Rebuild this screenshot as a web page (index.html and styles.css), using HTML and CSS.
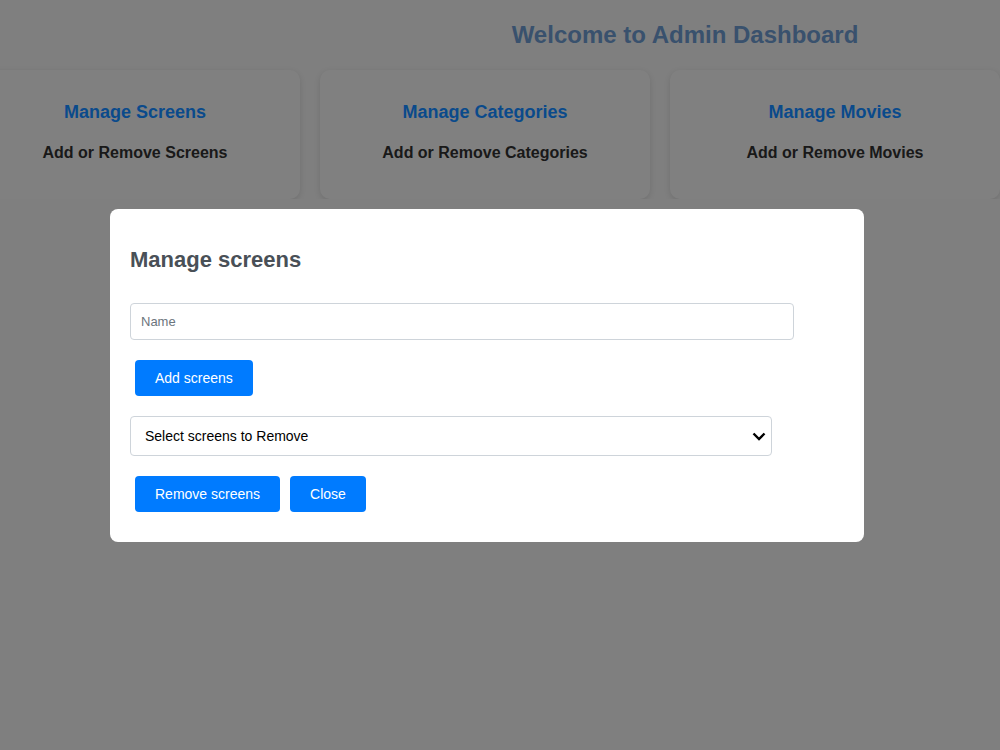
FILE: index.html
```html
<!DOCTYPE html>
<html lang="en">
<head>
  <meta charset="UTF-8">
  <meta name="viewport" content="width=device-width, initial-scale=1.0">
  <title>Admin Dashboard</title>
  <link rel="stylesheet" href="styles.css">
</head>
<body>

<div class="page">
  <h1 class="title">Welcome to Admin Dashboard</h1>

  <div class="cards">
    <div class="card">
      <h3>Manage Screens</h3>
      <p>Add or Remove Screens</p>
    </div>
    <div class="card">
      <h3>Manage Categories</h3>
      <p>Add or Remove Categories</p>
    </div>
    <div class="card">
      <h3>Manage Movies</h3>
      <p>Add or Remove Movies</p>
    </div>
  </div>
</div>

<div class="overlay">
  <div class="modal">
    <h2>Manage screens</h2>
    <input type="text" class="field" placeholder="Name">
    <div class="actions">
      <button>Add screens</button>
    </div>
    <select class="field select">
      <option>Select screens to Remove</option>
    </select>
    <div class="actions">
      <button>Remove screens</button>
      <button>Close</button>
    </div>
  </div>
</div>

</body>
</html>
```

FILE: styles.css
```css
body {
  margin: 0;
  font-family: "Liberation Sans", Arial, sans-serif;
  background-color: #d4d4d4;
  overflow: hidden;
}
.page {
  padding-top: 21px;
}
.title {
  margin: 0;
  padding-left: 370px;
  font-size: 24px;
  line-height: 28px;
  text-align: center;
  color: #5f87b6;
}
.cards {
  display: flex;
  gap: 20px;
  margin: 21px 0 0 -30px;
}
.card {
  flex: 0 0 330px;
  height: 129px;
  box-sizing: border-box;
  padding: 32px 20px 0;
  text-align: center;
  background-color: #d6d6d6;
  border-radius: 10px;
  box-shadow: 0 2px 6px rgba(0,0,0,0.12);
}
.card h3 {
  margin: 0 0 21px;
  font-size: 18px;
  line-height: 21px;
  color: #117ce8;
}
.card p {
  margin: 0;
  font-size: 16px;
  font-weight: bold;
  line-height: 18px;
  color: #2b2b2b;
}
.overlay {
  position: fixed;
  top: 0;
  left: 0;
  right: 0;
  bottom: 0;
  background-color: rgba(0,0,0,0.4);
}
.modal {
  width: 754px;
  box-sizing: border-box;
  margin: 209px 0 0 110px;
  padding: 20px 20px 30px;
  background-color: white;
  border-radius: 8px;
}
.modal h2 {
  margin: 18px 0 31px;
  font-size: 22px;
  line-height: 25px;
  color: #495057;
}
.field {
  display: block;
  box-sizing: border-box;
  border: 1px solid #ced4da;
  border-radius: 4px;
  font-family: "Liberation Sans", Arial, sans-serif;
}
input.field {
  width: 664px;
  height: 37px;
  padding: 0 10px;
  font-size: 13px;
  color: #495057;
}
input.field::placeholder {
  color: #6c757d;
}
.select {
  width: 642px;
  height: 40px;
  padding: 0 30px 0 14px;
  font-size: 14px;
  color: black;
  background-color: white;
  appearance: none;
  background-image: url("data:image/svg+xml,%3Csvg xmlns='http://www.w3.org/2000/svg' width='14' height='9' viewBox='0 0 14 9'%3E%3Cpath d='M1.5 1.5l5.5 5.5 5.5-5.5' fill='none' stroke='%23000' stroke-width='2.4'/%3E%3C/svg%3E");
  background-repeat: no-repeat;
  background-position: right 5px center;
}
.actions {
  display: flex;
  gap: 10px;
  margin: 20px 0 20px 5px;
}
.actions:last-child {
  margin-bottom: 0;
}
button {
  height: 36px;
  padding: 0 20px;
  border: none;
  border-radius: 4px;
  background-color: #007bff;
  color: white;
  font-family: "Liberation Sans", Arial, sans-serif;
  font-size: 14px;
  cursor: pointer;
}
button:hover {
  background-color: #0056b3;
}
```
